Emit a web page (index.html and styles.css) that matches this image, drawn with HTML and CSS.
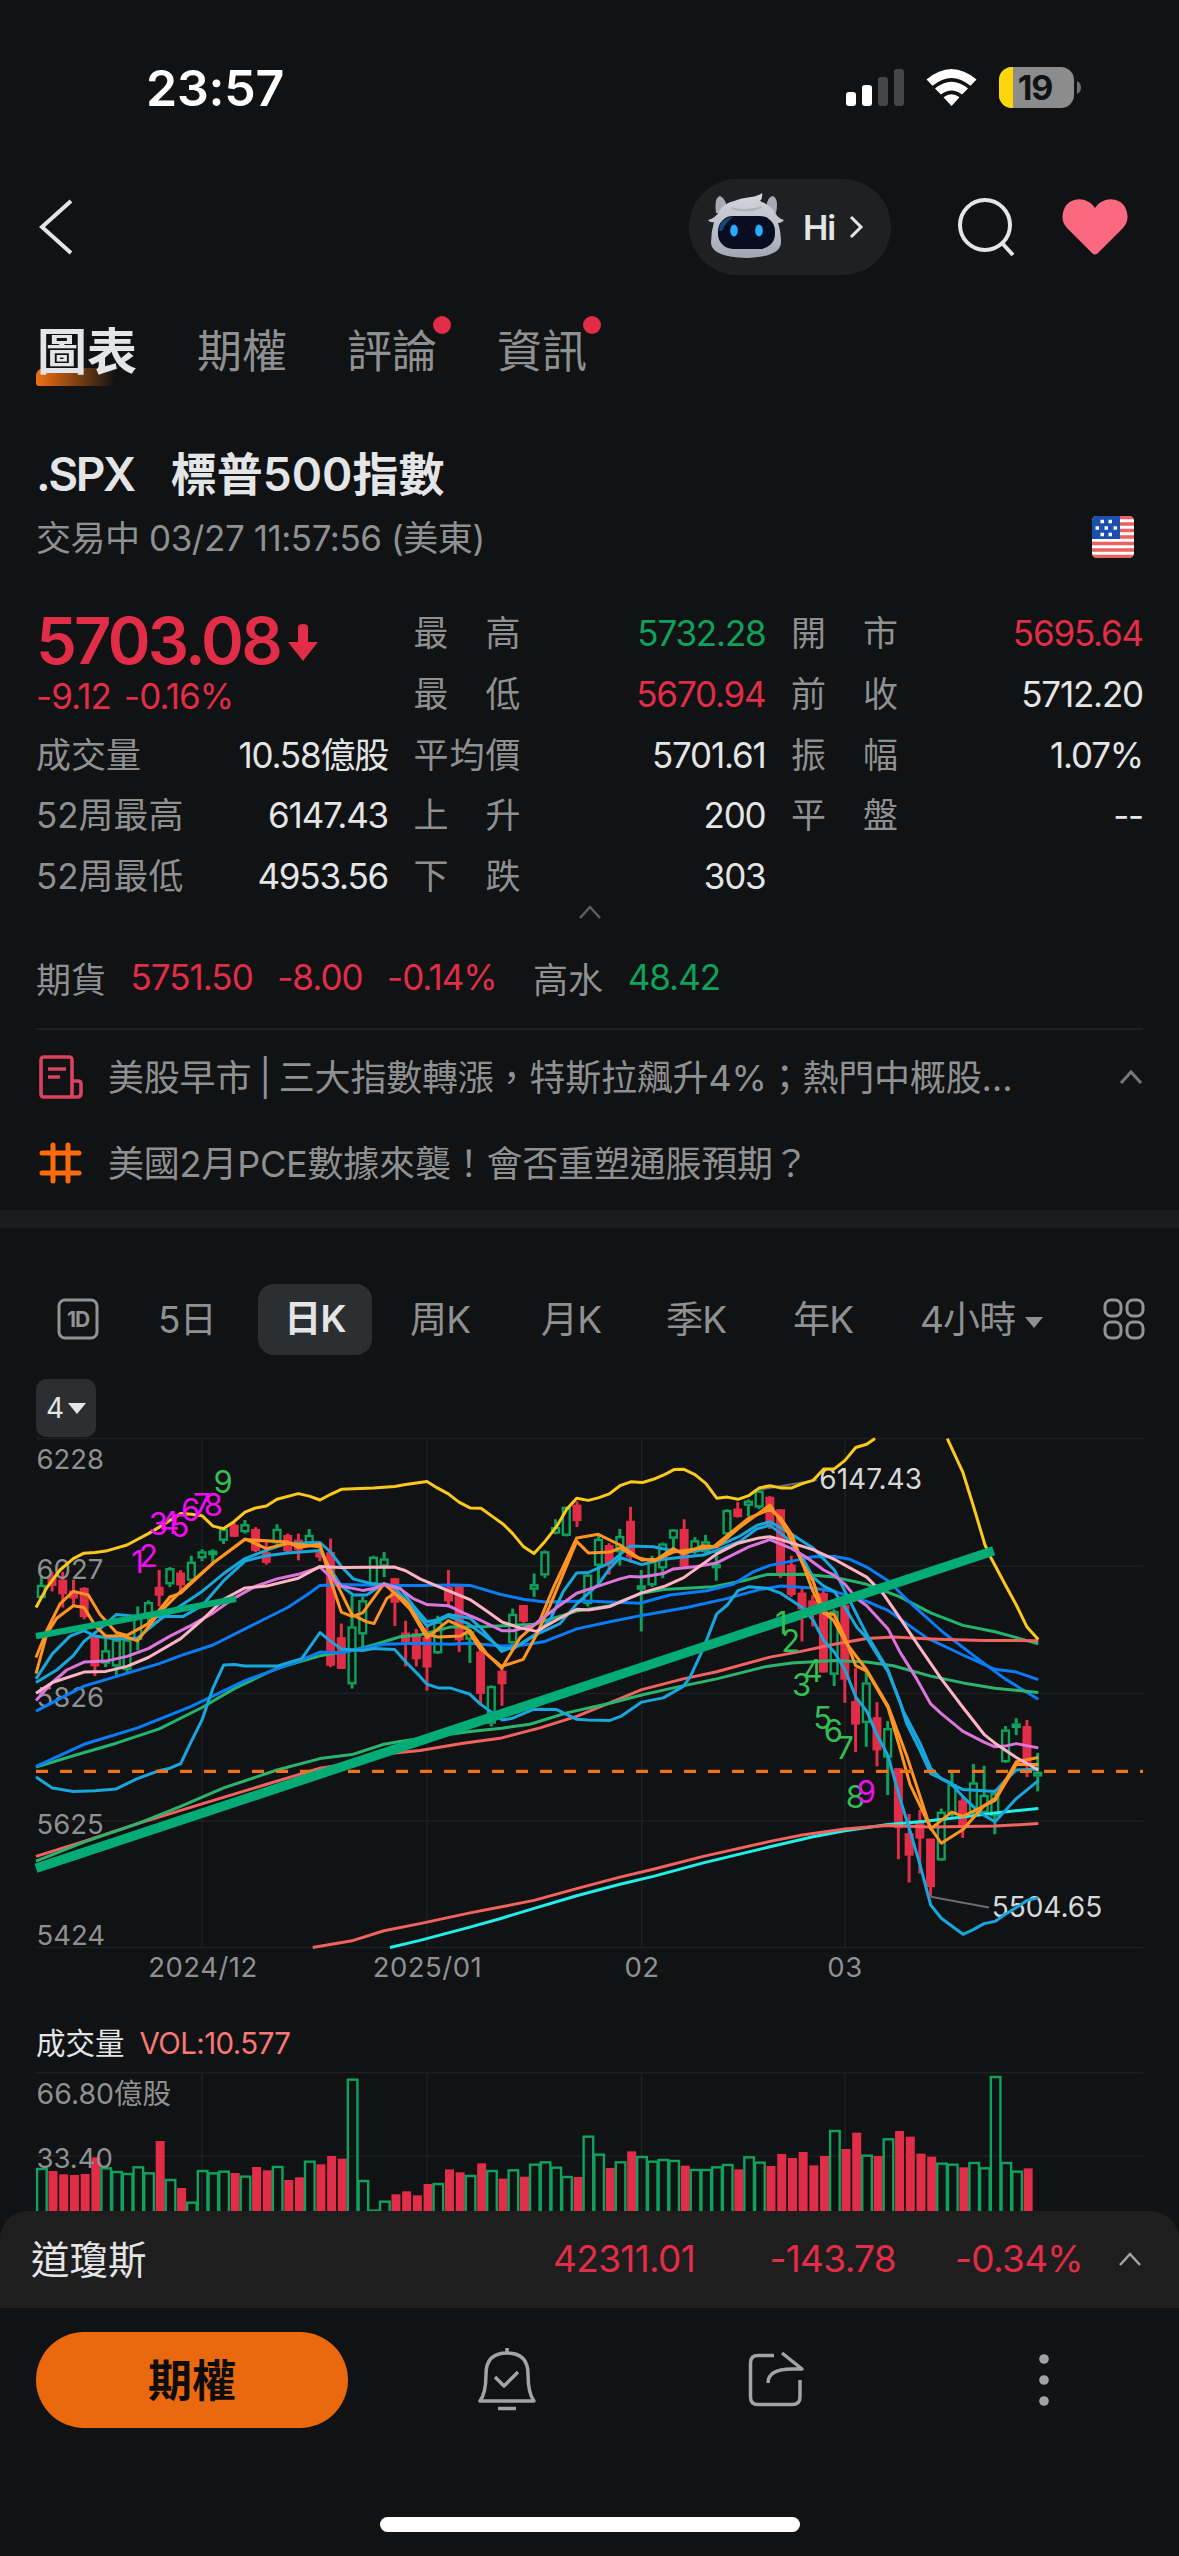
FILE: index.html
```html
<!DOCTYPE html>
<html lang="zh-Hant">

<head>
    <meta charset="UTF-8">
    <meta name="viewport" content="width=device-width, initial-scale=1.0">
    <title>.SPX 標普500指數</title>
    <link rel="stylesheet" href="styles.css">
</head>

<body>

    <header class="status-bar">
        <span class="time">23:57</span>
        <svg width="236" height="44" viewBox="846 66 236 44">
            <rect x="846" y="92" width="10" height="14" rx="3" fill="#fff"/>
            <rect x="862" y="85" width="10" height="21" rx="3" fill="#fff"/>
            <rect x="878" y="77" width="10" height="29" rx="3" fill="#454648"/>
            <rect x="894" y="69" width="10" height="37" rx="3" fill="#454648"/>
            <path d="M926.500 79.500Q951.500 58.500 976.500 79.500L970.500 85.800Q951.500 70 932.500 85.800ZM935 88.500Q951.500 75 968 88.500L962 94.600Q951.500 86.500 941 94.600ZM943.500 97.200Q951.500 91.500 959.500 97.200L951.500 106Z" fill="#fff"/>
            <clipPath id="cell"><rect x="999" y="67" width="75" height="41" rx="13"/></clipPath>
            <g clip-path="url(#cell)">
                <rect x="999" y="67" width="75" height="41" fill="#8b8c8b"/>
                <rect x="999" y="67" width="14" height="41" fill="#ffd60a"/>
            </g>
            <path d="M1077 81q4 2 4 6.500t-4 6.500z" fill="#6f7071"/>
            <text x="1035" y="100" class="battery-text">19</text>
        </svg>
    </header>

    <nav class="navbar">
        <svg class="back" width="36" height="56" viewBox="0 0 36 56"><path d="M33 2L4 28L33 54" fill="none" stroke="#e4e5e6" stroke-width="4"/></svg>
        <div class="ai-pill">
            <svg width="78" height="68" viewBox="0 0 78 68">
                <defs>
                    <linearGradient id="shell" x1="0" y1="0" x2="0" y2="1">
                        <stop offset="0" stop-color="#d4d6dc"/>
                        <stop offset=".6" stop-color="#b9bdc8"/>
                        <stop offset="1" stop-color="#a2a6b2"/>
                    </linearGradient>
                </defs>
                <path d="M8 20Q6 4 12 3Q17 5 19 14L58 14Q60 3 65 3Q71 6 68 20Z" fill="#a5aab5"/>
                <path d="M0 27Q8 25 12 17Q17 10 26 8Q33 5 43 4Q50 3 54 0Q55 5 52 8Q62 12 68 21Q70 25 76 27Q74 30 70 30Q73 39 73 50Q72 64 38 65Q4 64 3 50Q3 39 6 29Q2 30 0 27Z" fill="url(#shell)"/>
                <path d="M23 15Q38 20 54 14" fill="none" stroke="#aeb2bc" stroke-width="2"/>
                <rect x="10" y="23" width="57" height="33" rx="15" fill="#080d22"/>
                <path d="M11 38Q11 25 26 24Q19 27 14 38Z" fill="#164775"/>
                <ellipse cx="26" cy="37.500" rx="3.800" ry="6" fill="#27adff"/>
                <ellipse cx="51" cy="37.500" rx="3.800" ry="6" fill="#27adff"/>
            </svg>
            <span>Hi</span>
            <svg width="15" height="24" viewBox="0 0 15 24"><path d="M2 2L12 12L2 22" fill="none" stroke="#e4e5e6" stroke-width="3"/></svg>
        </div>
        <svg class="search" width="60" height="60" viewBox="0 0 60 60"><circle cx="28" cy="28" r="25" fill="none" stroke="#e4e5e6" stroke-width="4"/><path d="M45 46L56 58" stroke="#e4e5e6" stroke-width="4"/></svg>
        <svg class="heart" width="66" height="56" viewBox="0 0 66 56"><path d="M33 9C25-3 9-2 3 8Q-3 20 5 29L30 54Q33 57 36 54L61 29Q69 20 63 8C57-2 41-3 33 9Z" fill="#fa6980"/></svg>
    </nav>

    <div class="tabs">
        <span class="tab active">圖表</span>
        <span class="tab">期權</span>
        <span class="tab dot">評論</span>
        <span class="tab dot">資訊</span>
    </div>

    <div class="name"><span class="latin">.SPX</span><span>標普500指數</span></div>
    <div class="session">
        <span>交易中 03/27 11:57:56 (美東)</span>
        <svg width="42" height="42" viewBox="0 0 42 42">
            <clipPath id="flag"><rect width="42" height="42" rx="5"/></clipPath>
            <g clip-path="url(#flag)">
                <rect width="42" height="42" fill="#fff"/>
                <path d="M0 1.700h42M0 8h42M0 14.500h42M0 21h42M0 27.500h42M0 34h42M0 40.300h42" stroke="#e9625f" stroke-width="3.300"/>
                <rect width="28" height="23" fill="#1d4fae"/>
                <path d="M8.500 5.500h3.500M16.500 5.500h3.500M3.500 12h3.500M12.500 12h3.500M21.500 12h3.500M8.500 18.500h3.500M16.500 18.500h3.500" stroke="#fff" stroke-width="3.500"/>
            </g>
        </svg>
    </div>

    <div class="quote">
        <div class="col">
            <div class="price">5703.08<svg width="30" height="37" viewBox="0 0 30 37"><path d="M10 3q0-3 5-3t5 3v15h10L15 37L0 18h10z" fill="#e12d48"/></svg></div>
            <div class="change">-9.12 -0.16%</div>
            <div class="row"><label>成交量</label><span>10.58億股</span></div>
            <div class="row"><label>52周最高</label><span>6147.43</span></div>
            <div class="row"><label>52周最低</label><span>4953.56</span></div>
        </div>
        <div class="col spread">
            <div class="row"><label>最 高</label><span class="up">5732.28</span></div>
            <div class="row"><label>最 低</label><span class="down">5670.94</span></div>
            <div class="row"><label>平均價</label><span>5701.61</span></div>
            <div class="row"><label>上 升</label><span>200</span></div>
            <div class="row"><label>下 跌</label><span>303</span></div>
        </div>
        <div class="col spread">
            <div class="row"><label>開 市</label><span class="down">5695.64</span></div>
            <div class="row"><label>前 收</label><span>5712.20</span></div>
            <div class="row"><label>振 幅</label><span>1.07%</span></div>
            <div class="row"><label>平 盤</label><span>--</span></div>
        </div>
    </div>
    <svg class="collapse" width="22" height="14" viewBox="0 0 22 14"><path d="M1 13L11 2L21 13" fill="none" stroke="#5d5e60" stroke-width="2.500"/></svg>

    <div class="futures">
        <span class="muted">期貨</span>
        <span class="down">5751.50</span>
        <span class="down">-8.00</span>
        <span class="down">-0.14%</span>
        <span class="muted water">高水</span>
        <span class="up">48.42</span>
    </div>

    <div class="news">
        <div class="news-row">
            <svg width="44" height="44" viewBox="0 0 44 44"><path d="M33 42V5q0-3-3-3H5Q2 2 2 5v34q0 3 3 3h33q4 0 4-4V29q0-3-3-3h-6M9 14h18M9 22h12" fill="none" stroke="#d94360" stroke-width="3.600"/></svg>
            <p>美股早市 | 三大指數轉漲，特斯拉飆升4%；熱門中概股…</p>
            <svg width="24" height="16" viewBox="0 0 24 16"><path d="M2 14L12 3L22 14" fill="none" stroke="#77787a" stroke-width="3"/></svg>
        </div>
        <div class="news-row">
            <svg width="44" height="44" viewBox="0 0 44 44"><path d="M3 12h37M3 32h37M14 4v36M29 4v36" fill="none" stroke="#ff6a0a" stroke-width="5" stroke-linecap="round"/></svg>
            <p>美國2月PCE數據來襲！會否重塑通脹預期？</p>
        </div>
    </div>

    <div class="band"></div>

    <div class="periods">
        <svg width="42" height="42" viewBox="0 0 42 42"><rect x="2" y="2" width="38" height="38" rx="6" fill="none" stroke="#929394" stroke-width="3"/><text x="21" y="29" class="one-day">1D</text></svg>
        <span>5日</span>
        <span class="selected">日K</span>
        <span>周K</span>
        <span>月K</span>
        <span>季K</span>
        <span>年K</span>
        <span class="hours">4小時<i class="triangle"></i></span>
        <svg width="42" height="42" viewBox="0 0 42 42" fill="none" stroke="#929394" stroke-width="3"><rect x="2" y="2" width="16" height="16" rx="6"/><rect x="24" y="2" width="16" height="16" rx="6"/><rect x="2" y="24" width="16" height="16" rx="6"/><rect x="24" y="24" width="16" height="16" rx="6"/></svg>
    </div>

    <div class="indicator-count">4<i class="triangle"></i></div>

    <svg class="chart" id="priceChart" width="1179" height="553" viewBox="0 1437 1179 553"></svg>

    <div class="volume-title">成交量<span>VOL:10.577</span></div>
    <svg class="chart" id="volumeChart" width="1179" height="139" viewBox="0 2072 1179 139"></svg>

    <div class="index-bar">
        <span class="index-name">道瓊斯</span>
        <span class="down">42311.01</span>
        <span class="down">-143.78</span>
        <span class="down">-0.34%</span>
        <svg width="22" height="16" viewBox="0 0 22 16"><path d="M1 14L11 3L21 14" fill="none" stroke="#a3a4a5" stroke-width="2.500"/></svg>
    </div>

    <footer class="actions">
        <button class="option-btn">期權</button>
        <svg width="60" height="66" viewBox="477 2348 60 66" fill="none" stroke="#a2a3a4" stroke-width="3.500" stroke-linejoin="round"><path d="M507 2349v5M480 2402h54Q528 2394 528 2375Q528 2354 507 2354Q486 2354 486 2375Q486 2394 480 2402ZM498 2409.500h18M495 2378l9 9l14-14"/></svg>
        <svg width="58" height="58" viewBox="747 2353 58 58" fill="none" stroke="#a2a3a4" stroke-width="3.500"><path d="M774 2357.500H758Q750.500 2357.500 750.500 2365V2399Q750.500 2406.500 758 2406.500H792Q800 2406.500 800 2399V2382M782 2355L802 2371H792Q768 2371 768 2385" stroke-linejoin="round"/></svg>
        <svg width="12" height="60" viewBox="0 0 12 60" fill="#a2a3a4"><circle cx="6" cy="9" r="4.800"/><circle cx="6" cy="30" r="4.800"/><circle cx="6" cy="51" r="4.800"/></svg>
    </footer>
    <div class="home-indicator"></div>

    <script src="chart.js"></script>
</body>

</html>
```

FILE: styles.css
```css
* {
    box-sizing: border-box;
}

body {
    margin: 0;
    width: 1179px;
    height: 2556px;
    overflow: hidden;
    display: flex;
    flex-direction: column;
    background-color: #101213;
    color: #e4e5e6;
    font-family: Inter, "Noto Sans CJK TC", sans-serif;
    font-size: 35px;
}

svg {
    display: block;
    flex: none;
}

.up {
    color: #0ea25d;
}

.down {
    color: #e12d48;
}

.muted {
    color: #8f9092;
}

/* top */
.status-bar {
    height: 134px;
    padding: 42px 97px 0 146px;
    display: flex;
    justify-content: space-between;
    align-items: center;
}

.time {
    color: #fff;
    font-size: 50px;
    font-weight: 600;
    letter-spacing: -0.2px;
}

.battery-text {
    font-size: 34px;
    font-weight: 700;
    text-anchor: middle;
    letter-spacing: -1px;
    fill: #101213;
}

.navbar {
    height: 186px;
    padding: 0 51px 0 38px;
    display: flex;
    align-items: center;
}

.ai-pill {
    width: 202px;
    height: 96px;
    margin-left: auto;
    padding-left: 19px;
    display: flex;
    align-items: center;
    border-radius: 48px;
    background-color: #1e2021;
    font-size: 34px;
    font-weight: 600;
}

.ai-pill span {
    margin: 0 14px 0 17px;
    letter-spacing: -1px;
}

.search {
    margin: 0 45px 0 66px;
}

.tabs {
    height: 64px;
    padding-left: 37px;
    display: flex;
    align-items: center;
    gap: 60px;
    font-size: 45px;
    line-height: 64px;
    color: #8f9092;
}

.tab {
    position: relative;
}

.tab.active {
    color: #e4e5e6;
    font-size: 50px;
    font-weight: 700;
}

.tab.active::before {
    content: "";
    position: absolute;
    z-index: -1;
    left: -1px;
    bottom: -2px;
    width: 80px;
    height: 18px;
    border-radius: 8px 0 0 3px;
    background: linear-gradient(90deg, #f07012, rgba(240, 112, 18, 0));
}

.tab.dot::after {
    content: "";
    position: absolute;
    right: -14px;
    top: -4px;
    width: 18px;
    height: 18px;
    border-radius: 50%;
    background-color: #e12d48;
}

.name {
    height: 60px;
    margin-top: 60px;
    padding-left: 36px;
    display: flex;
    gap: 37px;
    font-size: 46px;
    line-height: 60px;
    font-weight: 600;
}

.name .latin {
    letter-spacing: -2.4px;
}

.session {
    height: 62px;
    padding: 0 45px 0 36px;
    display: flex;
    justify-content: space-between;
    align-items: center;
    color: #8f9092;
    letter-spacing: -0.45px;
}

.session svg {
    margin-top: 4px;
}

/* quote */
.quote {
    height: 302px;
    margin-top: 37px;
    padding: 0 36px;
    display: grid;
    grid-template-columns: 352px 352px 352px;
    gap: 25.5px;
}

.row {
    height: 60.7px;
    display: flex;
    justify-content: space-between;
    align-items: center;
    line-height: 60px;
    letter-spacing: -1.2px;
}

.row label {
    color: #8f9092;
    letter-spacing: 0;
}

.spread label {
    width: 107px;
    text-align-last: justify;
}

.price {
    height: 60.7px;
    padding-top: 15px;
    display: flex;
    align-items: center;
    gap: 8px;
    color: #e12d48;
    font-size: 65px;
    line-height: 60px;
    font-weight: 600;
    letter-spacing: -2.8px;
}

.price svg {
    margin-top: 3px;
}

.change {
    height: 60.7px;
    line-height: 64px;
    color: #e12d48;
    letter-spacing: -0.9px;
    word-spacing: 4px;
}

.collapse {
    margin: 0 auto;
}

.futures {
    height: 40px;
    margin-top: 38px;
    padding-left: 36px;
    display: flex;
    align-items: center;
    gap: 24.5px;
    letter-spacing: -1px;
}

.futures .muted {
    letter-spacing: 0;
}

.futures .water {
    margin-left: 12px;
}

.news {
    margin: 31px 36px 0;
    padding-top: 4px;
    border-top: 2px solid #1e2022;
    color: #8f9092;
}

.news-row {
    height: 86px;
    display: flex;
    align-items: center;
    padding-left: 3px;
}

.news-row p {
    flex: 1;
    margin: 0 0 5px 25px;
    white-space: nowrap;
    font-size: 36px;
    letter-spacing: -0.2px;
    word-spacing: -2px;
}

.band {
    height: 18px;
    margin-top: 4px;
    background-color: #1a1b1d;
}

/* chart */
.periods {
    height: 71px;
    margin: 56px 34px 0 57px;
    display: grid;
    grid-template-columns: 101px 100px 152px 131px 125px 127px 127px 183px 42px;
    align-items: center;
    color: #8f9092;
    font-size: 37px;
    letter-spacing: -0.8px;
}

.periods span {
    padding-bottom: 5px;
}

.periods .selected {
    width: 114px;
    height: 71px;
    line-height: 69px;
    padding: 0;
    text-align: center;
    border-radius: 16px;
    background-color: #2c2f32;
    color: #e4e5e6;
    font-weight: 600;
}

.periods svg {
    margin-bottom: 2px;
}

.one-day {
    font-size: 21px;
    font-weight: 700;
    letter-spacing: -1px;
    text-anchor: middle;
    fill: #929394;
}

.triangle {
    display: inline-block;
    border: 9px solid transparent;
    border-top: 11px solid currentColor;
    border-bottom: none;
}

.hours .triangle {
    margin: 0 0 5px 9px;
}

.indicator-count {
    width: 60px;
    height: 58px;
    margin: 24px 0 0 36px;
    display: flex;
    justify-content: center;
    align-items: center;
    gap: 4px;
    border-radius: 10px;
    background-color: #2c2f32;
    font-size: 28px;
}

.chart text {
    font-size: 27.5px;
    fill: #8f9092;
}

.chart .date {
    letter-spacing: 0.5px;
    text-anchor: middle;
}

.chart .mark {
    font-size: 28px;
    fill: #d7d8d9;
}

.chart .count {
    font-size: 31px;
    text-anchor: middle;
}

.volume-title {
    height: 82px;
    padding: 29px 0 0 36px;
    font-size: 29.5px;
    line-height: 48px;
}

.volume-title span {
    margin-left: 15px;
    color: #f87878;
    letter-spacing: -0.6px;
}

/* bottom */
.index-bar {
    height: 97px;
    padding: 0 38px 2px 31px;
    display: grid;
    grid-template-columns: 463px 201px 201px 187px 58px;
    align-items: center;
    text-align: right;
    border-radius: 28px 28px 0 0;
    background-color: #1e1e1e;
    font-size: 37px;
    letter-spacing: -0.7px;
}

.index-name {
    padding-bottom: 3px;
    text-align: left;
    font-size: 38.5px;
    letter-spacing: 0;
}

.index-bar svg {
    margin-left: auto;
}

.actions {
    height: 120px;
    padding: 24px 0 0 36px;
    display: grid;
    grid-template-columns: 441px 270px 291px 12px;
    align-items: center;
}

.option-btn {
    width: 312px;
    height: 96px;
    padding-bottom: 5px;
    border: none;
    border-radius: 48px;
    background-color: #ea690e;
    color: #0c0c0c;
    font-family: inherit;
    font-size: 44px;
    font-weight: 700;
}

.home-indicator {
    width: 420px;
    height: 15px;
    margin: 89px auto 0;
    border-radius: 8px;
    background-color: #fff;
}
```

FILE: chart.js
```javascript
const GREEN = '#0ea25d';
const RED = '#e12d48';
const GRID = '#1d1f21';

// data units -> screen
const X = v => 20 + v / 3;
const Y = v => 1420 + v / 2.8;

// color, body top, body bottom, high, low
const candles = [
    ['g', 462, 498, 440, 500], ['r', 440, 465, 425, 480], ['r', 447, 488, 425, 525], ['r', 478, 500, 447, 522],
    ['r', 470, 552, 468, 558], ['r', 605, 690, 600, 717], ['g', 645, 682, 612, 692], ['g', 615, 690, 600, 715],
    ['g', 615, 700, 612, 708], ['g', 548, 615, 522, 645], ['g', 510, 545, 505, 580], ['r', 467, 492, 420, 522],
    ['g', 415, 460, 412, 468], ['r', 427, 463, 420, 478], ['g', 397, 450, 380, 455], ['g', 368, 387, 362, 395],
    ['g', 366, 378, 362, 400], ['g', 305, 338, 300, 347], ['r', 293, 327, 288, 328], ['g', 292, 314, 280, 318],
    ['r', 305, 367, 300, 370], ['r', 370, 400, 340, 405], ['g', 305, 345, 292, 350], ['r', 322, 368, 318, 370],
    ['r', 335, 365, 318, 393], ['g', 322, 345, 305, 350], ['r', 370, 385, 360, 395], ['r', 370, 688, 332, 692],
    ['r', 608, 697, 570, 697], ['g', 578, 740, 492, 752], ['g', 505, 600, 495, 640], ['g', 383, 460, 380, 465],
    ['g', 388, 410, 370, 440], ['r', 443, 512, 443, 577], ['r', 595, 622, 562, 690], ['r', 597, 670, 585, 690],
    ['r', 608, 693, 570, 758], ['g', 565, 653, 548, 655], ['r', 468, 508, 420, 525], ['r', 465, 617, 460, 650],
    ['g', 592, 615, 585, 680], ['r', 648, 767, 640, 797], ['g', 745, 850, 743, 858], ['r', 702, 740, 690, 800],
    ['g', 543, 625, 528, 640], ['r', 518, 565, 518, 568], ['g', 460, 475, 430, 495], ['g', 368, 435, 365, 442],
    ['g', 300, 318, 278, 320], ['g', 243, 324, 243, 326], ['r', 237, 283, 228, 300], ['g', 433, 515, 430, 522],
    ['g', 333, 408, 325, 460], ['r', 350, 402, 345, 433], ['g', 325, 370, 305, 408], ['r', 282, 385, 243, 400],
    ['g', 463, 475, 420, 592], ['g', 395, 463, 380, 468], ['g', 346, 415, 343, 443], ['g', 307, 332, 305, 365],
    ['r', 305, 410, 278, 412], ['g', 337, 370, 328, 375], ['g', 340, 370, 322, 378], ['g', 403, 415, 370, 450],
    ['g', 252, 320, 250, 325], ['r', 248, 272, 230, 273], ['g', 226, 240, 222, 270], ['g', 198, 245, 195, 250],
    ['r', 215, 295, 213, 305], ['r', 250, 437, 250, 442], ['r', 405, 490, 380, 495], ['r', 483, 530, 470, 620],
    ['r', 505, 545, 490, 578], ['r', 485, 707, 470, 707], ['g', 535, 713, 530, 745], ['r', 518, 727, 515, 792],
    ['r', 787, 853, 695, 930], ['g', 735, 848, 700, 915], ['r', 832, 925, 790, 970], ['g', 863, 945, 843, 1050],
    ['r', 975, 1143, 975, 1230], ['r', 1157, 1220, 1103, 1295], ['r', 1122, 1172, 1092, 1270], ['r', 1172, 1308, 1172, 1335],
    ['g', 1097, 1233, 1088, 1235], ['g', 1020, 1105, 988, 1110], ['r', 1065, 1140, 1050, 1170], ['g', 1015, 1100, 963, 1110],
    ['g', 1050, 1100, 968, 1105], ['g', 1045, 1110, 1035, 1160], ['g', 867, 958, 857, 960], ['g', 850, 862, 835, 882],
    ['r', 857, 960, 840, 1000], ['g', 985, 998, 932, 1040]
];

const series = [
    ['#22b56d', '48,972 160,940 289,905 418,865 546,805 643,752 771,695 900,660 996,645 1060,630 1140,607 1200,602 1290,580 1400,578 1545,572 1575,562 1670,535 1770,520 1865,485 1930,475 2080,467 2170,450 2240,433 2347,432 2443,440 2540,460 2640,495 2732,540 2829,575 2925,593 3000,612 3055,627'],
    ['#0a7cf5', '48,815 192,745 300,715 418,682 482,660 579,630 675,585 803,525 868,485 900,463 960,461 1092,463 1200,463 1300,462 1350,463 1440,488 1510,502 1575,510 1700,507 1860,513 1950,490 2060,478 2140,460 2200,425 2250,407 2315,395 2379,383 2443,382 2490,390 2540,412 2604,450 2680,520 2770,595 2890,680 2955,725 3055,782'],
    ['#0a7cf5', '48,970 192,908 353,862 514,802 675,730 835,675 900,650 964,652 1092,628 1200,625 1290,628 1350,625 1445,633 1510,630 1575,620 1670,585 1770,565 1865,547 2000,525 2120,500 2218,475 2282,465 2379,470 2443,480 2540,508 2604,533 2720,610 2829,658 2925,698 2989,706 3055,727'],
    ['#f2625f', '48,1222 192,1180 353,1130 546,1075 740,1020 900,975 1000,960 1092,935 1200,925 1330,905 1445,890 1560,862 1670,830 1800,780 1865,755 1990,725 2090,705 2250,664 2347,647 2443,628 2540,612 2620,608 2732,613 2890,617 3055,618'],
    ['#2cb46f', '48,1235 192,1182 353,1130 482,1082 611,1030 771,980 900,948 996,937 1092,908 1140,900 1250,885 1350,872 1445,863 1530,852 1640,820 1770,793 1865,770 1960,750 2090,725 2240,690 2315,680 2443,673 2540,678 2620,688 2732,717 2829,736 2925,751 3055,763'],
    ['#21f0ea', '1110,1477 1200,1457 1350,1420 1445,1395 1540,1368 1670,1332 1800,1300 1900,1278 2050,1240 2250,1195 2379,1167 2475,1150 2604,1133 2700,1125 2829,1112 2925,1100 3055,1088'],
    ['#f2625f', '878,1477 1000,1457 1092,1430 1200,1410 1350,1380 1445,1363 1542,1345 1670,1312 1800,1280 1900,1258 2050,1222 2250,1180 2347,1162 2475,1145 2600,1135 2732,1140 2829,1138 2925,1137 3055,1130'],
    ['#18a7dc', '48,725 97,655 150,605 192,590 225,605 289,613 353,610 418,560 482,520 546,480 611,430 675,388 739,365 803,345 835,345 900,343 932,370 964,410 1000,445 1060,460 1100,460 1140,470 1180,520 1221,565 1250,560 1285,545 1350,555 1380,580 1445,648 1500,628 1550,598 1590,560 1630,480 1670,428 1705,427 1770,400 1830,353 1900,355 1990,372 2080,358 2160,325 2210,295 2250,285 2315,320 2379,358 2443,420 2475,480 2540,600 2604,700 2650,815 2700,905 2732,975 2764,1005 2829,1035 2925,1040 2955,1010 2989,980 3055,978'],
    ['#18a7dc', '48,735 110,700 160,660 192,620 240,585 289,545 353,550 418,550 490,550 546,520 611,450 675,395 739,380 803,372 900,365 930,415 964,465 1000,490 1040,490 1092,458 1124,470 1180,530 1221,577 1285,550 1345,570 1445,640 1480,640 1550,600 1620,570 1670,515 1735,460 1770,415 1800,385 1865,405 1930,390 2050,378 2090,365 2160,340 2210,305 2250,295 2300,330 2347,385 2379,440 2411,465 2443,480 2475,525 2510,580 2540,610 2604,705 2640,790 2660,850 2700,925 2732,990 2790,1015 2829,1055 2880,1100 2925,1125 2989,1060 3055,1010'],
    ['#18a7dc', '48,1000 97,1030 160,1040 225,1038 289,1033 350,1005 418,982 450,975 482,962 514,900 546,840 579,750 611,686 643,685 675,689 771,689 803,680 845,668 900,595 932,620 964,641 1028,645 1060,640 1124,643 1157,677 1200,718 1221,740 1255,750 1290,750 1350,768 1380,795 1447,840 1478,835 1540,810 1610,811 1670,838 1705,840 1770,841 1802,830 1865,790 1930,778 1990,746 2010,720 2050,640 2090,543 2122,518 2154,478 2186,467 2240,471 2282,485 2315,505 2347,525 2379,560 2411,617 2443,650 2475,700 2507,775 2540,815 2570,880 2604,940 2640,1060 2670,1150 2700,1245 2732,1358 2764,1395 2829,1440 2860,1427 2892,1410 2925,1404 2955,1385 2989,1365 3021,1345 3055,1338'],
    ['#ff9423', '48,665 80,590 120,515 160,480 205,490 240,545 289,595 321,603 385,570 450,495 482,485 580,400 675,335 803,342 835,357 900,348 932,450 964,538 996,550 1028,540 1092,458 1124,485 1170,530 1221,610 1285,562 1350,590 1400,655 1445,695 1500,610 1560,560 1600,470 1670,330 1735,320 1800,350 1865,392 1910,390 1960,360 1990,375 2050,352 2090,355 2160,300 2250,238 2300,310 2347,400 2379,450 2411,540 2443,545 2475,610 2507,688 2540,703 2604,805 2640,920 2670,1020 2732,1143 2764,1185 2829,1147 2892,1080 2925,1060 2989,957 3055,945'],
    ['#ff9423', '48,710 80,600 110,555 160,520 192,525 225,575 257,605 310,605 353,618 418,540 482,480 580,400 675,333 739,360 803,345 900,355 930,420 996,545 1040,565 1062,570 1100,500 1124,485 1160,510 1221,600 1255,608 1320,605 1345,592 1380,640 1445,690 1510,670 1550,600 1590,520 1670,340 1705,372 1770,370 1800,358 1850,385 1900,395 1960,370 2080,355 2186,275 2250,250 2282,275 2315,320 2379,480 2411,540 2440,560 2475,620 2540,700 2604,800 2660,940 2732,1145 2795,1098 2829,1110 2925,1065 2989,965 3055,965'],
    ['#dd74dc', '48,785 97,735 140,700 192,678 257,675 321,662 385,640 450,605 514,575 580,540 640,500 707,465 771,445 835,432 900,412 932,440 964,465 1028,477 1060,472 1092,460 1140,472 1180,500 1221,517 1285,520 1330,540 1380,560 1445,590 1480,590 1540,575 1610,525 1670,485 1735,465 1800,445 1830,438 1865,440 1930,430 1960,417 2030,410 2090,400 2186,355 2250,335 2315,360 2360,385 2411,420 2443,435 2475,460 2510,500 2540,520 2604,585 2640,650 2690,725 2732,795 2764,822 2829,872 2892,902 2925,915 2955,913 2989,906 3055,918'],
    ['#ffb3c4', '48,765 97,735 192,706 257,704 321,690 385,665 482,612 546,560 611,502 675,470 739,465 835,443 900,410 964,413 1124,412 1157,422 1200,445 1270,472 1350,503 1400,535 1445,565 1500,582 1550,592 1600,565 1670,530 1705,532 1770,522 1865,484 1935,465 1990,442 2058,397 2090,375 2154,345 2218,330 2250,327 2282,335 2379,363 2443,390 2540,440 2590,487 2640,555 2690,625 2764,725 2829,805 2892,880 2925,905 2989,945 3055,980'],
    ['#fbc91c', '48,525 80,470 120,420 160,388 192,373 225,371 257,367 321,350 385,318 418,300 482,262 514,264 546,268 579,297 611,304 643,284 675,258 707,246 739,241 771,222 835,206 868,213 900,224 932,208 964,194 1060,190 1124,186 1157,181 1221,172 1252,190 1285,207 1317,230 1350,246 1383,247 1420,272 1450,292 1478,318 1510,354 1542,374 1575,340 1610,298 1640,250 1670,219 1705,225 1735,218 1768,207 1800,184 1832,173 1868,175 1900,166 1935,152 1962,139 1992,138 2025,153 2058,178 2090,219 2122,216 2154,222 2186,212 2218,190 2250,184 2282,190 2315,190 2347,178 2379,169 2411,137 2443,137 2475,113 2507,77 2540,68 2565,52'],
    ['#fbc91c', '2782,52 2828,145 2860,240 2895,350 2915,390 2955,460 2989,518 3021,580 3055,615']
];

const counts = [
    ['1', 353, 427, '#f10df0'], ['2', 385, 411, '#f10df0'], ['3', 415, 323, '#f10df0'], ['4', 448, 318, '#f10df0'],
    ['5', 480, 327, '#f10df0'], ['6', 512, 284, '#f10df0'], ['7', 545, 268, '#f10df0'], ['8', 580, 270, '#f10df0'],
    ['9', 609, 204, '#35bd55'],
    ['1', 2284, 600, '#35bd55'], ['2', 2312, 650, '#35bd55'], ['3', 2345, 774, '#35bd55'], ['4', 2378, 734, '#35bd55'],
    ['5', 2408, 865, '#35bd55'], ['6', 2440, 902, '#35bd55'], ['7', 2475, 948, '#35bd55'], ['8', 2506, 1087, '#35bd55'],
    ['9', 2539, 1072, '#f10df0']
];

const volumes = 'g567 r573 r583 r585 r582 r532 g565 g576 g582 g562 g580 r483 g600 r624 g668 g573 g580 g575 r579 g590 r561 r571 g561 r600 r592 g545 r553 r528 r536 g299 g603 g692 g665 r643 r634 r646 r612 g612 r568 r577 g588 r550 g573 r596 g571 r590 g554 g547 g563 g591 r591 g470 g524 r564 g547 r514 g531 g545 g540 g543 r557 g570 g570 g562 g555 r568 g532 g548 r558 r522 r534 r516 r556 r528 g453 r507 r458 g527 r528 g478 r453 r470 r521 r530 g551 g554 r562 g549 g565 g291 g549 g575 r565'.split(' ');

function line(x1, y1, x2, y2, color, width, extra = '') {
    return `<line x1="${x1}" y1="${y1}" x2="${x2}" y2="${y2}" stroke="${color}" stroke-width="${width}" ${extra}/>`;
}

function label(x, y, text, extra = '') {
    return `<text x="${x}" y="${y}" ${extra}>${text}</text>`;
}

function drawPrice() {
    let out = '';
    [52, 409, 766, 1123, 1477].forEach(y => out += line(36, Y(y), 1143, Y(y), GRID, 1.5));
    [546, 1221, 1865, 2475].forEach(x => out += line(X(x), Y(52), X(x), Y(1477), GRID, 1.5));

    candles.forEach(([c, top, bottom, high, low], i) => {
        const cx = X(64 + i * 32.14);
        const color = c === 'g' ? GREEN : RED;
        if (c === 'r') {
            out += line(cx, Y(high), cx, Y(low), color, 3);
            out += `<rect x="${cx - 4.5}" y="${Y(top)}" width="9" height="${(bottom - top) / 2.8}" fill="${color}"/>`;
        } else {
            // rising candles are hollow
            out += line(cx, Y(high), cx, Y(top), color, 3) + line(cx, Y(bottom), cx, Y(low), color, 3);
            out += `<rect x="${cx - 3.4}" y="${Y(top) + 1}" width="6.8" height="${Math.max((bottom - top) / 2.8 - 2, 2)}" fill="none" stroke="${color}" stroke-width="2.4"/>`;
        }
    });

    out += line(X(2218), Y(195), X(2390), Y(168), '#6b6c6e', 2);
    out += line(X(2732), Y(1335), X(2907), Y(1365), '#6b6c6e', 2);
    [[6228, 136], [6027, 446], [5826, 803], [5625, 1159], [5424, 1469]].forEach(([t, y]) => out += label(36.5, Y(y), t));
    out += label(X(2398), Y(193), '6147.43', 'class="mark"');
    out += label(X(2915), Y(1391), '5504.65', 'class="mark"');

    series.forEach(([color, data]) => {
        const points = data.split(' ').map(p => {
            const [x, y] = p.split(',');
            return X(x).toFixed(1) + ',' + Y(y).toFixed(1);
        }).join(' ');
        out += `<polyline points="${points}" fill="none" stroke="${color}" stroke-width="3" stroke-linejoin="round"/>`;
    });

    out += line(36, Y(984), 1143, Y(984), '#ef7417', 3.2, 'stroke-dasharray="12 12"');
    out += line(36, Y(605), X(648), Y(501), '#03ac74', 6.5);
    out += line(36, Y(1255), X(2921), Y(366), '#03ac74', 9.5);
    counts.forEach(([t, x, y, color]) => out += label(X(x), Y(y), t, `class="count" style="fill:${color}"`));

    [['2024/12', 203], ['2025/01', 427.5], ['02', 642], ['03', 845]].forEach(([t, x]) => out += label(x, 1977, t, 'class="date"'));
    document.getElementById('priceChart').innerHTML = out;
}

function drawVolume() {
    let out = line(36, 2072.7, 1143, 2072.7, GRID, 1.5) + line(36, 2156, 1143, 2156, GRID, 1.5);
    [202, 427, 641.5, 845].forEach(x => out += line(x, 2072, x, 2211, GRID, 1.5));
    volumes.forEach((v, i) => {
        const cx = 41.8 + i * 10.716;
        const y = 1980 + v.slice(1) / 3;
        if (v[0] === 'r') {
            out += `<rect x="${cx - 4}" y="${y}" width="9" height="150" fill="${RED}"/>`;
        } else {
            out += `<rect x="${cx - 4.7}" y="${y}" width="9.6" height="150" fill="none" stroke="${GREEN}" stroke-width="2.4"/>`;
        }
    });
    out += label(36.5, 2104, '66.80億股', 'style="font-size:28.5px"') + label(36.5, 2168, '33.40');
    document.getElementById('volumeChart').innerHTML = out;
}

drawPrice();
drawVolume();
```
